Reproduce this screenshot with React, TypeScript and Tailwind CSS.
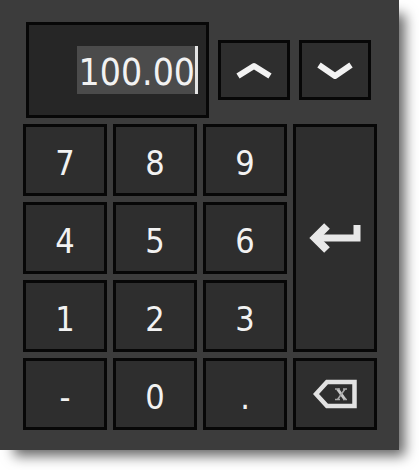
import { useState } from "react";
import type { ReactNode } from "react";

type KeyProps = {
  label: string;
  onPress: () => void;
  className?: string;
  children: ReactNode;
};

function Key({ label, onPress, className = "h-[72px]", children }: KeyProps) {
  return (
    <button
      type="button"
      aria-label={label}
      onClick={onPress}
      className={`flex items-center justify-center border-[3px] border-[#070707] bg-[#2e2e2e] text-[34px] leading-none text-[#f2f2f2] ${className}`}
    >
      {children}
    </button>
  );
}

function Chevron({ d }: { d: string }) {
  return (
    <svg width="36" height="20" viewBox="0 0 36 20" fill="none" stroke="#f2f2f2" strokeWidth="6" strokeLinejoin="round" aria-hidden="true">
      <path d={d} />
    </svg>
  );
}

function EnterIcon() {
  return (
    <svg width="52" height="32" viewBox="0 0 52 32" fill="none" stroke="#e8e8e8" aria-hidden="true">
      <path d="M48 3V16H9" strokeWidth="7" />
      <path d="M18 4L6 16L18 28" strokeWidth="8" />
    </svg>
  );
}

function BackspaceIcon() {
  return (
    <svg width="44" height="30" viewBox="0 0 44 30" fill="none" stroke="#e2e2e2" aria-hidden="true">
      <path d="M14 3H41.5V27H14L3 15Z" strokeWidth="4.5" />
      <path d="M24.5 10L32 20.5" stroke="#c8c8c8" strokeWidth="3" />
      <path d="M32 10L24.5 20.5M22 10H27M30 10H34M22 20.5H27M30 20.5H34" stroke="#a8a8a8" strokeWidth="1.5" />
    </svg>
  );
}

export default function App() {
  const [value, setValue] = useState("100.00");
  const type = (text: string) => setValue((v) => v + text);
  const step = (by: number) => setValue((v) => ((Number(v) || 0) + by).toFixed(2));

  const digit = (text: string) => (
    <Key key={text} label={text} onPress={() => type(text)} className="h-[72px] pt-1.5">
      {text}
    </Key>
  );

  return (
    <div className="bg-white pr-5 pb-5 font-['DejaVu_Sans_Condensed','DejaVu_Sans',sans-serif]">
      <main className="flex flex-col gap-1.5 bg-[#3c3c3c] pt-[22px] pr-[22px] pb-5 pl-[23px] shadow-[10px_10px_12px_-4px_rgba(0,0,0,0.6)]">
        <div className="flex items-center gap-[9px] pr-1.5 pl-[3px]">
          <div className="flex h-24 min-w-0 flex-1 items-center justify-end border-[3px] border-[#070707] bg-[#262626] pr-2">
            <input
              aria-label="Amount"
              inputMode="decimal"
              value={value}
              onChange={(e) => setValue(e.target.value)}
              className="h-12 w-[121px] border-r-[3px] border-[#e4e4e4] bg-[#4b4b4b] pt-1 text-right text-[37px] leading-none text-[#f2f2f2] outline-none"
            />
          </div>
          <Key label="Increase" onPress={() => step(1)} className="h-[60px] w-[72px]">
            <Chevron d="M2 16L18 6L34 16" />
          </Key>
          <Key label="Decrease" onPress={() => step(-1)} className="h-[60px] w-[72px]">
            <Chevron d="M2 5L18 16L34 5" />
          </Key>
        </div>
        <div className="grid grid-cols-4 gap-1.5">
          {["7", "8", "9"].map(digit)}
          <Key label="Enter" onPress={() => step(0)} className="row-span-3">
            <EnterIcon />
          </Key>
          {["4", "5", "6", "1", "2", "3", "-", "0", "."].map(digit)}
          <Key label="Backspace" onPress={() => setValue((v) => v.slice(0, -1))}>
            <BackspaceIcon />
          </Key>
        </div>
      </main>
    </div>
  );
}
